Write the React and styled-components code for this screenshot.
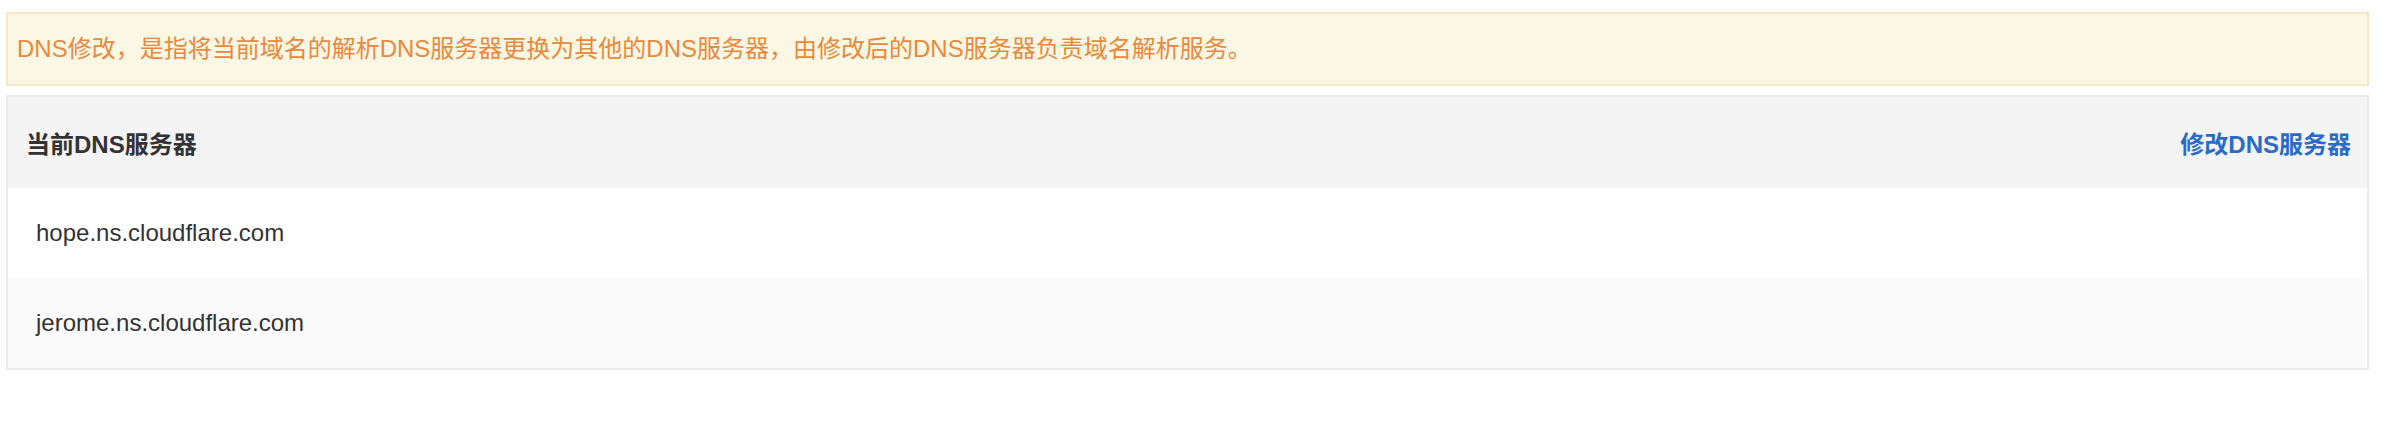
import styled, { createGlobalStyle } from 'styled-components';

const GlobalStyle = createGlobalStyle`
  body {
    margin: 0;
    background: #ffffff;
    font-family: "Liberation Sans", Arial, "Noto Sans CJK SC", sans-serif;
  }
`;

const Page = styled.div`
  padding: 12px 13px 0 6px;
`;

const Alert = styled.div`
  display: flex;
  align-items: center;
  height: 74px;
  box-sizing: border-box;
  padding: 0 9px;
  background: #fbf7e5;
  border: 2px solid #f6e7c9;
  color: #e8893b;
  font-size: 24px;
  line-height: 1;
`;

const Panel = styled.div`
  margin-top: 9px;
  border: 2px solid #ebebeb;
  background: #ffffff;
`;

const PanelHeader = styled.div`
  display: flex;
  align-items: center;
  justify-content: space-between;
  height: 91px;
  padding: 0 16px 0 18px;
  background: #f4f4f4;
`;

const PanelTitle = styled.div`
  font-size: 24px;
  font-weight: bold;
  color: #333333;
`;

const PanelLink = styled.a`
  font-size: 24px;
  font-weight: bold;
  color: #2a6bc8;
  text-decoration: none;
  cursor: pointer;
`;

const ServerRow = styled.div`
  display: flex;
  align-items: center;
  height: 90px;
  padding: 0 28px;
  background: ${(p) => (p.striped ? '#fafafa' : '#ffffff')};
  color: #333333;
  font-size: 24px;
`;

const servers = ['hope.ns.cloudflare.com', 'jerome.ns.cloudflare.com'];

function App() {
  return (
    <>
      <GlobalStyle />
      <Page>
        <Alert>
          DNS修改，是指将当前域名的解析DNS服务器更换为其他的DNS服务器，由修改后的DNS服务器负责域名解析服务。
        </Alert>
        <Panel>
          <PanelHeader>
            <PanelTitle>当前DNS服务器</PanelTitle>
            <PanelLink>修改DNS服务器</PanelLink>
          </PanelHeader>
          {servers.map((name, i) => (
            <ServerRow key={name} striped={i % 2 === 1}>
              {name}
            </ServerRow>
          ))}
        </Panel>
      </Page>
    </>
  );
}

export default App;
